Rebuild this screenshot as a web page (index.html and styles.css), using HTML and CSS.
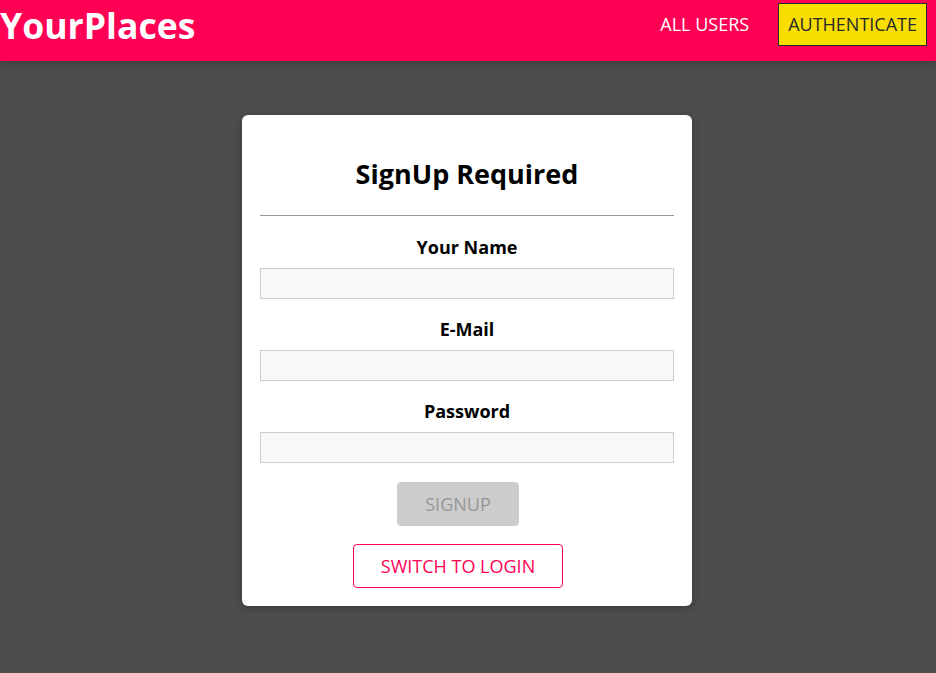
FILE: index.html
```html
<!DOCTYPE html>
<html lang="en">
<head>
<meta charset="utf-8">
<title>YourPlaces</title>
<link rel="stylesheet" href="styles.css">
</head>
<body>
<header class="main-header">
  <h1 class="brand">YourPlaces</h1>
  <nav class="nav-links">
    <a class="nav-link">ALL USERS</a>
    <a class="nav-link nav-link--active">AUTHENTICATE</a>
  </nav>
</header>
<main class="page">
  <section class="card auth">
    <h2 class="auth-title">SignUp Required</h2>
    <hr class="auth-rule">
    <form class="auth-form">
      <div class="field">
        <label class="field-label">Your Name</label>
        <input class="field-input" type="text">
      </div>
      <div class="field">
        <label class="field-label">E-Mail</label>
        <input class="field-input" type="email">
      </div>
      <div class="field field--last">
        <label class="field-label">Password</label>
        <input class="field-input" type="password">
      </div>
      <button class="button button--submit" type="button" disabled>SIGNUP</button>
    </form>
    <button class="button button--inverse" type="button">SWITCH TO LOGIN</button>
  </section>
</main>
</body>
</html>
```
FILE: styles.css
```css
* { box-sizing: border-box; }
html, body { margin: 0; padding: 0; }
body {
  font-family: "Open Sans", "Noto Sans", sans-serif;
  background: #4d4d4d;
  height: 673px;
  overflow: hidden;
}
.main-header {
  height: 61px;
  background: #ff0055;
  display: flex;
  align-items: center;
  justify-content: space-between;
  padding: 0 9px 12px 0;
  box-shadow: 0 2px 8px rgba(0,0,0,0.26);
}
.brand {
  margin: 0;
  color: #fff;
  font-size: 35.6px;
  font-weight: 700;
  line-height: 1;
  padding-top: 2px;
}
.nav-links {
  display: flex;
  align-items: center;
  gap: 19px;
}
.nav-link {
  color: #fff;
  font-size: 18px;
  padding: 8px 9px;
  border: 1px solid transparent;
  line-height: 25px;
}
.nav-link--active {
  background: #f8df00;
  border-color: #292929;
  color: #292929;
}
.page {
  display: flex;
  justify-content: center;
  padding: 54px 2px 0 0;
}
.card {
  background: #fff;
  border-radius: 6px;
  box-shadow: 0 2px 8px rgba(0,0,0,0.26);
}
.auth {
  width: 450px;
  padding: 18px;
  text-align: center;
}
.auth-title {
  margin: 22px 0 0;
  font-size: 27px;
  font-weight: 700;
  line-height: 37px;
  color: #000;
}
.auth-rule {
  margin: 23px 0 0;
  border: none;
  border-top: 1px solid #999;
}
.auth-form {
  margin-top: 19px;
}
.field {
  display: flex;
  flex-direction: column;
  margin-bottom: 18px;
}
.field--last {
  margin-top: 1px;
}
.field-label {
  font-weight: 700;
  font-size: 18px;
  line-height: 25px;
  margin-bottom: 8px;
  color: #000;
}
.field-input {
  height: 31px;
  width: 100%;
  font: inherit;
  border: 1px solid #ccc;
  background: #f8f8f8;
  padding: 2px 4px;
}
.button {
  font-family: inherit;
  font-size: 18px;
  padding: 8px 27px;
  line-height: 26px;
  border: 1px solid #ff0055;
  border-radius: 4px;
  background: #ff0055;
  color: #fff;
  margin-right: 18px;
  display: inline-block;
  cursor: pointer;
}
.button:disabled {
  background: #ccc;
  color: #979797;
  border-color: #ccc;
  cursor: not-allowed;
}
.button--submit {
  margin-top: 1px;
}
.button--inverse {
  background: transparent;
  color: #ff0055;
  margin-top: 18px;
}
```
